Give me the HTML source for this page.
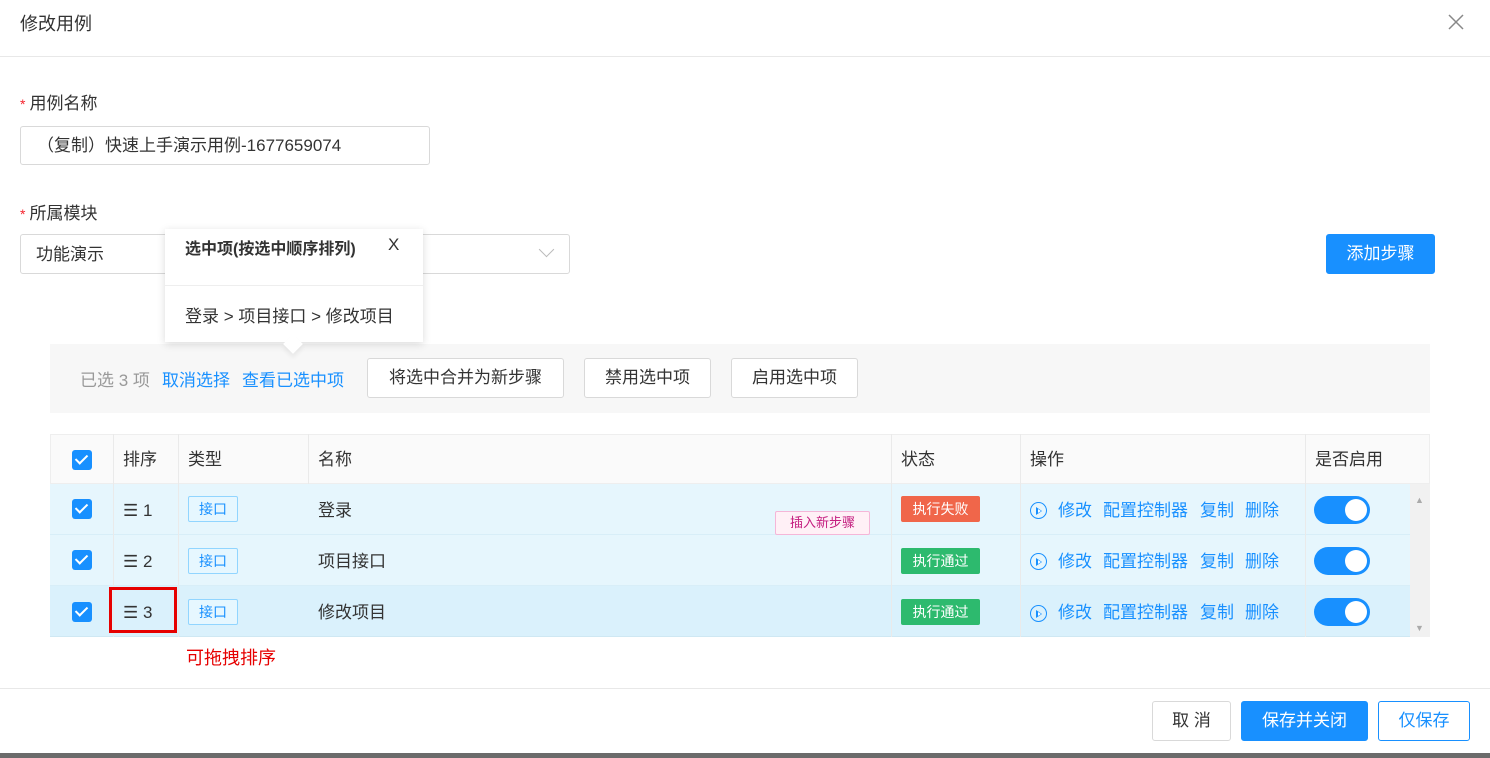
<!DOCTYPE html>
<html><head><meta charset="utf-8"><style>
*{box-sizing:border-box;margin:0;padding:0}
body{width:1490px;height:758px;background:#fff;position:relative;overflow:hidden;font-family:"Liberation Sans","Noto Sans CJK SC",sans-serif;color:#333;font-size:17px;line-height:24px}
.a{position:absolute;white-space:nowrap}
.btn{position:absolute;border:1px solid #d9d9d9;border-radius:3px;background:#fff;display:flex;align-items:center;justify-content:center;font-size:17px;color:#333;line-height:20px}
.blue{background:#1890ff;border-color:#1890ff;color:#fff}
.req{color:#f5222d;font-size:14px;margin-right:4px}
.cb{position:absolute;width:20px;height:20px;background:#1890ff;border-radius:3px}
.cb::after{content:"";position:absolute;left:6px;top:2px;width:5px;height:10px;border:solid #fff;border-width:0 2px 2px 0;transform:rotate(45deg)}
.tag{position:absolute;width:50px;height:26px;border:1px solid #91d5ff;background:#e6f7ff;color:#1890ff;font-size:14px;display:flex;align-items:center;justify-content:center;border-radius:2px}
.st{position:absolute;width:79px;height:26px;color:#fff;font-size:14px;display:flex;align-items:center;justify-content:center;border-radius:2px}
.sw{position:absolute;width:56px;height:28px;border-radius:14px;background:#1890ff}
.sw::after{content:"";position:absolute;right:3px;top:3px;width:22px;height:22px;border-radius:50%;background:#fff}
.ops{position:absolute;color:#1890ff;font-size:17px;white-space:nowrap}
.ops span{position:absolute;top:0}
.ic{width:17px;height:17px;border:1.5px solid #1890ff;border-radius:50%}
.ic::after{content:"";position:absolute;left:5px;top:3.5px;border-left:6px solid #1890ff;border-top:4px solid transparent;border-bottom:4px solid transparent}
.ic::before{content:"";position:absolute;left:6.5px;top:5.5px;border-left:3px solid #fff;border-top:2px solid transparent;border-bottom:2px solid transparent;z-index:1}
.vl{position:absolute;width:1px;background:#eaeaea}
</style></head><body>
<div class="a" style="left:20px;top:12px;font-size:18px;color:#333">修改用例</div>
<svg class="a" style="left:1448px;top:14px" width="16" height="16"><path d="M1 1L15 15M15 1L1 15" stroke="#888" stroke-width="1.5"/></svg>
<div class="a" style="left:0;top:56px;width:1490px;height:1px;background:#e8e8e8"></div>

<div class="a" style="left:20px;top:92px"><span class="req">*</span>用例名称</div>
<div class="a" style="left:20px;top:126px;width:410px;height:39px;border:1px solid #d9d9d9;border-radius:3px;padding:7px 0 0 16px">（复制）快速上手演示用例-1677659074</div>

<div class="a" style="left:20px;top:202px"><span class="req">*</span>所属模块</div>
<div class="a" style="left:20px;top:234px;width:550px;height:40px;border:1px solid #d9d9d9;border-radius:3px;padding:8px 0 0 15px">功能演示</div>
<div class="a" style="left:541px;top:244px;width:11px;height:11px;border:solid #bbb;border-width:0 1px 1px 0;transform:rotate(45deg)"></div>
<div class="btn blue" style="left:1326px;top:234px;width:109px;height:40px">添加步骤</div>

<div class="a" style="left:50px;top:344px;width:1380px;height:69px;background:#f7f7f7"></div>
<div class="a" style="left:80px;top:369px;color:#999">已选 3 项</div>
<div class="a" style="left:162px;top:369px;color:#1890ff">取消选择</div>
<div class="a" style="left:242px;top:369px;color:#1890ff">查看已选中项</div>
<div class="btn" style="left:367px;top:358px;width:197px;height:40px">将选中合并为新步骤</div>
<div class="btn" style="left:584px;top:358px;width:127px;height:40px">禁用选中项</div>
<div class="btn" style="left:731px;top:358px;width:127px;height:40px">启用选中项</div>

<div class="a" style="left:165px;top:229px;width:258px;height:113px;background:#fff;box-shadow:0 2px 8px rgba(0,0,0,.15)"></div>
<div class="a" style="left:286px;top:337px;width:14px;height:14px;background:#fff;transform:rotate(45deg);box-shadow:3px 3px 5px rgba(0,0,0,.06)"></div>
<div class="a" style="left:185px;top:238px;font-weight:bold;font-size:16px;color:#333">选中项(按选中顺序排列)</div>
<div class="a" style="left:388px;top:233px;font-size:17px;color:#333">X</div>
<div class="a" style="left:165px;top:285px;width:258px;height:1px;background:#eee"></div>
<div class="a" style="left:185px;top:305px;color:#333">登录 &gt; 项目接口 &gt; 修改项目</div>

<!-- table -->
<div class="a" style="left:50px;top:434px;width:1380px;height:50px;background:#fafafa;border:1px solid #eee"></div>
<div class="a" style="left:50px;top:484px;width:1360px;height:51px;background:#e6f6fd;border-bottom:1px solid #d8eef8"></div>
<div class="a" style="left:50px;top:535px;width:1360px;height:51px;background:#e6f6fd;border-bottom:1px solid #d8eef8"></div>
<div class="a" style="left:50px;top:586px;width:1360px;height:51px;background:#daf1fc;border-bottom:1px solid #cfe8f3"></div>
<div class="a" style="left:1410px;top:484px;width:20px;height:153px;background:#f1f1f1"></div>
<div class="a" style="left:1415px;top:488px;font-size:9px;color:#aaa">▲</div>
<div class="a" style="left:1415px;top:616px;font-size:9px;color:#aaa">▼</div>
<div class="vl" style="left:113px;top:434px;height:203px"></div>
<div class="vl" style="left:178px;top:434px;height:203px"></div>
<div class="vl" style="left:308px;top:434px;height:50px"></div>
<div class="vl" style="left:891px;top:434px;height:203px"></div>
<div class="vl" style="left:1020px;top:434px;height:203px"></div>
<div class="vl" style="left:1305px;top:434px;height:203px"></div>

<div class="cb" style="left:72px;top:450px"></div>
<div class="a" style="left:123px;top:448px">排序</div>
<div class="a" style="left:188px;top:448px">类型</div>
<div class="a" style="left:318px;top:448px">名称</div>
<div class="a" style="left:901px;top:448px">状态</div>
<div class="a" style="left:1030px;top:448px">操作</div>
<div class="a" style="left:1315px;top:448px">是否启用</div>

<div class="cb" style="left:72px;top:499px"></div>
<div class="a" style="left:123px;top:499px">☰ 1</div>
<div class="tag" style="left:188px;top:496px">接口</div>
<div class="a" style="left:318px;top:499px">登录</div>
<div class="a" style="left:775px;top:511px;width:95px;height:24px;border:1px solid #f5b6d8;background:#fff0f6;color:#c41d7f;font-size:13px;display:flex;align-items:center;justify-content:center;border-radius:2px">插入新步骤</div>
<div class="st" style="left:901px;top:496px;background:#f0664a">执行失败</div>

<div class="cb" style="left:72px;top:550px"></div>
<div class="a" style="left:123px;top:550px">☰ 2</div>
<div class="tag" style="left:188px;top:548px">接口</div>
<div class="a" style="left:318px;top:550px">项目接口</div>
<div class="st" style="left:901px;top:548px;background:#2dba6e">执行通过</div>

<div class="cb" style="left:72px;top:602px"></div>
<div class="a" style="left:123px;top:601px">☰ 3</div>
<div class="tag" style="left:188px;top:599px">接口</div>
<div class="a" style="left:318px;top:601px">修改项目</div>
<div class="st" style="left:901px;top:599px;background:#2dba6e">执行通过</div>
<div class="a" style="left:109px;top:587px;width:68px;height:46px;border:3px solid #e60000"></div>

<div class="ops" style="left:1030px;top:499px"><span class="ic" style="top:3px"></span><span style="left:28px">修改</span><span style="left:73px">配置控制器</span><span style="left:170px">复制</span><span style="left:215px">删除</span></div>
<div class="ops" style="left:1030px;top:550px"><span class="ic" style="top:3px"></span><span style="left:28px">修改</span><span style="left:73px">配置控制器</span><span style="left:170px">复制</span><span style="left:215px">删除</span></div>
<div class="ops" style="left:1030px;top:601px"><span class="ic" style="top:4px"></span><span style="left:28px">修改</span><span style="left:73px">配置控制器</span><span style="left:170px">复制</span><span style="left:215px">删除</span></div>
<div class="sw" style="left:1314px;top:496px"></div>
<div class="sw" style="left:1314px;top:547px"></div>
<div class="sw" style="left:1314px;top:598px"></div>

<div class="a" style="left:186px;top:646px;color:#e60000;font-size:18px">可拖拽排序</div>

<div class="a" style="left:0;top:688px;width:1490px;height:1px;background:#e8e8e8"></div>
<div class="btn" style="left:1152px;top:701px;width:79px;height:40px">取 消</div>
<div class="btn blue" style="left:1241px;top:701px;width:127px;height:40px">保存并关闭</div>
<div class="btn" style="left:1378px;top:701px;width:92px;height:40px;border-color:#1890ff;color:#1890ff">仅保存</div>
<div class="a" style="left:0;top:753px;width:1490px;height:5px;background:#6b6b6b"></div>
</body></html>
